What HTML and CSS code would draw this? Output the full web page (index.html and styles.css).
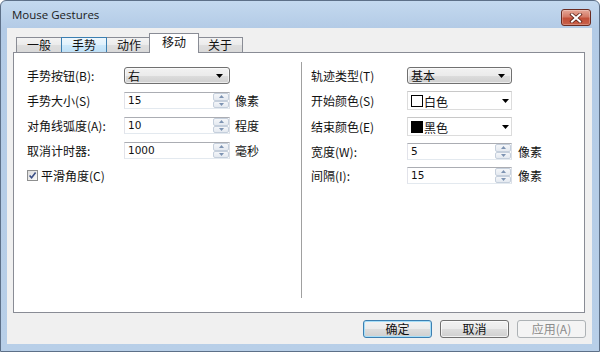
FILE: index.html
```html
<!DOCTYPE html>
<html>
<head>
<meta charset="utf-8">
<link rel="stylesheet" href="styles.css">
</head>
<body>
<div class="window">
  <div class="titlebar">
    <span class="title">Mouse Gestures</span>
    <div class="close">
      <svg width="14" height="10" viewBox="0 0 14 10"><path d="M3 1.5 L11 8.5 M11 1.5 L3 8.5" stroke="#5a1f16" stroke-width="3.6" stroke-linecap="square"/><path d="M3 1.5 L11 8.5 M11 1.5 L3 8.5" stroke="#ffffff" stroke-width="2" stroke-linecap="square"/></svg>
    </div>
  </div>
  <div class="client">
    <div class="tabs">
      <div class="tab">一般</div>
      <div class="tab hover">手势</div>
      <div class="tab">动作</div>
      <div class="tab selected">移动</div>
      <div class="tab">关于</div>
    </div>
    <div class="panel">
      <div class="col left">
        <div class="row">
          <span class="lbl">手势按钮(B):</span>
          <div class="combo"><span class="ctext">右</span><svg class="arrow" width="7" height="4" viewBox="0 0 7 4"><polygon points="0,0 7,0 3.5,4" fill="#000"/></svg></div>
        </div>
        <div class="row">
          <span class="lbl">手势大小(S)</span>
          <div class="spin"><span class="val">15</span><div class="sbs"><div class="sb"><svg width="5" height="3" viewBox="0 0 5 3"><polygon points="0,3 5,3 2.5,0" fill="#7d93b2"/></svg></div><div class="sb"><svg width="5" height="3" viewBox="0 0 5 3"><polygon points="0,0 5,0 2.5,3" fill="#7d93b2"/></svg></div></div></div>
          <span class="suf">像素</span>
        </div>
        <div class="row">
          <span class="lbl">对角线弧度(A):</span>
          <div class="spin"><span class="val">10</span><div class="sbs"><div class="sb"><svg width="5" height="3" viewBox="0 0 5 3"><polygon points="0,3 5,3 2.5,0" fill="#7d93b2"/></svg></div><div class="sb"><svg width="5" height="3" viewBox="0 0 5 3"><polygon points="0,0 5,0 2.5,3" fill="#7d93b2"/></svg></div></div></div>
          <span class="suf">程度</span>
        </div>
        <div class="row">
          <span class="lbl">取消计时器:</span>
          <div class="spin"><span class="val">1000</span><div class="sbs"><div class="sb"><svg width="5" height="3" viewBox="0 0 5 3"><polygon points="0,3 5,3 2.5,0" fill="#7d93b2"/></svg></div><div class="sb"><svg width="5" height="3" viewBox="0 0 5 3"><polygon points="0,0 5,0 2.5,3" fill="#7d93b2"/></svg></div></div></div>
          <span class="suf">毫秒</span>
        </div>
        <div class="row check">
          <span class="cbox"><svg width="9" height="9" viewBox="0 0 9 9"><path d="M1.6 4.4 L3.6 6.8 L7.6 1.6" fill="none" stroke="#3b4f86" stroke-width="1.6"/></svg></span>
          <span class="ctl">平滑角度(C)</span>
        </div>
      </div>
      <div class="divider"></div>
      <div class="col right">
        <div class="row">
          <span class="lbl">轨迹类型(T)</span>
          <div class="combo"><span class="ctext">基本</span><svg class="arrow" width="7" height="4" viewBox="0 0 7 4"><polygon points="0,0 7,0 3.5,4" fill="#000"/></svg></div>
        </div>
        <div class="row tall">
          <span class="lbl">开始颜色(S)</span>
          <div class="ccombo"><span class="swatch white"></span><span class="ctext2">白色</span><svg class="arrow" width="7" height="4" viewBox="0 0 7 4"><polygon points="0,0 7,0 3.5,4" fill="#000"/></svg></div>
        </div>
        <div class="row tall">
          <span class="lbl">结束颜色(E)</span>
          <div class="ccombo"><span class="swatch black"></span><span class="ctext2">黑色</span><svg class="arrow" width="7" height="4" viewBox="0 0 7 4"><polygon points="0,0 7,0 3.5,4" fill="#000"/></svg></div>
        </div>
        <div class="row">
          <span class="lbl">宽度(W):</span>
          <div class="spin"><span class="val">5</span><div class="sbs"><div class="sb"><svg width="5" height="3" viewBox="0 0 5 3"><polygon points="0,3 5,3 2.5,0" fill="#7d93b2"/></svg></div><div class="sb"><svg width="5" height="3" viewBox="0 0 5 3"><polygon points="0,0 5,0 2.5,3" fill="#7d93b2"/></svg></div></div></div>
          <span class="suf">像素</span>
        </div>
        <div class="row">
          <span class="lbl">间隔(I):</span>
          <div class="spin"><span class="val">15</span><div class="sbs"><div class="sb"><svg width="5" height="3" viewBox="0 0 5 3"><polygon points="0,3 5,3 2.5,0" fill="#7d93b2"/></svg></div><div class="sb"><svg width="5" height="3" viewBox="0 0 5 3"><polygon points="0,0 5,0 2.5,3" fill="#7d93b2"/></svg></div></div></div>
          <span class="suf">像素</span>
        </div>
      </div>
    </div>
    <div class="buttons">
      <div class="btn default">确定</div>
      <div class="btn">取消</div>
      <div class="btn disabled">应用(A)</div>
    </div>
  </div>
</div>
</body>
</html>
```

FILE: styles.css
```css
html, body {
  margin: 0;
  padding: 0;
  width: 600px;
  height: 352px;
  overflow: hidden;
  background: #ffffff;
}

.window {
  width: 600px;
  height: 352px;
  box-sizing: border-box;
  border: 1px solid #5d7088;
  border-radius: 6px 6px 0 0;
  background: linear-gradient(#c4d9ef 0px, #b3cbe6 27px, #b8cfe8 100%);
  padding: 0 7px 7px 6px;
  display: flex;
  flex-direction: column;
  font-family: "Noto Sans CJK SC", "Noto Sans", sans-serif;
  font-size: 12px;
  color: #111;
}

.titlebar {
  height: 27px;
  display: flex;
  align-items: flex-start;
  padding-top: 8px;
  box-sizing: border-box;
}

.title {
  font-family: "Open Sans", "Noto Sans", sans-serif;
  font-size: 11.5px;
  color: #1b1b1b;
  padding-left: 5px;
  line-height: 12px;
}

.close {
  margin-left: auto;
  margin-right: 1px;
  width: 30px;
  height: 17px;
  box-sizing: border-box;
  border: 1px solid #6b2c22;
  border-radius: 3px;
  background: linear-gradient(#e6a797 0%, #d47a66 45%, #c24f38 55%, #c9614a 100%);
  display: flex;
  align-items: center;
  justify-content: center;
  box-shadow: inset 0 0 0 1px rgba(255,255,255,0.25);
}

.client {
  flex: 1;
  background: #f0f0f0;
  display: flex;
  flex-direction: column;
}

.tabs {
  height: 24px;
  display: flex;
  align-items: flex-end;
  padding-left: 9px;
  position: relative;
  z-index: 1;
}

.tab {
  height: 15px;
  box-sizing: border-box;
  padding: 0 10px;
  border: 1px solid #898c95;
  border-bottom: none;
  margin-right: -1px;
  background: linear-gradient(#f3f3f3 0%, #ebebeb 50%, #dedede 51%, #d9d9d9 100%);
  line-height: 14px;
  display: flex;
  align-items: center;
}

.tab.hover {
  background: linear-gradient(#eef7fd 0%, #e0f1fc 50%, #cde8fa 51%, #bfe0f6 100%);
  border-color: #3c7fb1;
  position: relative;
  z-index: 1;
}

.tab.selected {
  height: 20px;
  background: #ffffff;
  margin: 0 -2px -1px -2px;
  padding: 0 12px 3px 12px;
  position: relative;
  z-index: 2;
}

.panel {
  height: 261px;
  box-sizing: border-box;
  margin: 0 7px 0 6px;
  border: 1px solid #898c95;
  background: #ffffff;
  display: flex;
  padding: 9px 0 14px 13px;
}

.col {
  display: flex;
  flex-direction: column;
  padding-top: 5px;
}

.col.left {
  width: 274px;
  gap: 8px;
}

.col.right {
  padding-left: 9px;
  gap: 7px;
}

.divider {
  width: 1px;
  background: #a0a0a0;
  box-shadow: 1px 0 0 #ffffff;
}

.row {
  height: 17px;
  display: flex;
  align-items: center;
}

.row.tall {
  height: 19px;
}

.lbl {
  line-height: 17px;
}

.left .lbl {
  width: 97px;
}

.right .lbl {
  width: 96px;
}

.suf {
  margin-left: 5px;
}

.right .suf {
  margin-left: 6px;
}

.combo {
  width: 106px;
  height: 17px;
  box-sizing: border-box;
  border: 1px solid #707070;
  border-radius: 3px;
  background: linear-gradient(#f2f2f2 0%, #ebebeb 50%, #dddddd 51%, #cfcfcf 100%);
  box-shadow: inset 0 0 0 1px rgba(255,255,255,0.6);
  display: flex;
  align-items: center;
  padding-left: 3px;
  padding-right: 6px;
}

.right .combo {
  width: 105px;
}

.ctext {
  flex: 1;
  line-height: 15px;
}

.arrow {
  flex: none;
}

.ccombo {
  width: 105px;
  height: 19px;
  box-sizing: border-box;
  border: 1px solid #dcdcdc;
  border-top-color: #c8c8c8;
  background: #ffffff;
  display: flex;
  align-items: center;
  padding-left: 3px;
  padding-right: 2px;
  padding-top: 1px;
}

.swatch {
  width: 12px;
  height: 12px;
  box-sizing: border-box;
  border: 1px solid #000;
  flex: none;
}

.swatch.white {
  background: #ffffff;
}

.swatch.black {
  background: #000000;
}

.ctext2 {
  flex: 1;
  margin-left: 1px;
  line-height: 15px;
}

.spin {
  width: 106px;
  height: 17px;
  box-sizing: border-box;
  border: 1px solid #abadb3;
  border-color: #abadb3 #dbdfe6 #e3e9ef #e2e3ea;
  background: #ffffff;
  display: flex;
}

.right .spin {
  width: 105px;
}

.val {
  flex: 1;
  font-family: "DejaVu Sans", sans-serif;
  font-size: 10.5px;
  line-height: 15px;
  padding-left: 3px;
}

.sbs {
  width: 16px;
  display: flex;
  flex-direction: column;
}

.sb {
  flex: 1;
  box-sizing: border-box;
  border: 1px solid #c5cfdc;
  border-radius: 2px;
  background: linear-gradient(#f4f6f9, #e4e9f0);
  display: flex;
  align-items: center;
  justify-content: center;
}

.row.check {
  height: 17px;
}

.cbox {
  width: 11px;
  height: 11px;
  box-sizing: border-box;
  border: 1px solid #8e8f8f;
  background: linear-gradient(135deg, #dcdcdc, #fbfbfb);
  display: flex;
  align-items: center;
  justify-content: center;
  flex: none;
}

.ctl {
  margin-left: 3px;
}

.buttons {
  display: flex;
  justify-content: flex-end;
  gap: 8px;
  padding: 7px 6px 0 0;
}

.btn {
  width: 69px;
  height: 18px;
  box-sizing: border-box;
  border: 1px solid #707070;
  border-radius: 3px;
  background: linear-gradient(#f2f2f2 0%, #ebebeb 50%, #dddddd 51%, #cfcfcf 100%);
  box-shadow: inset 0 0 0 1px rgba(255,255,255,0.7);
  display: flex;
  align-items: center;
  justify-content: center;
  line-height: 16px;
}

.btn.default {
  border-color: #3c7fb1;
  box-shadow: inset 0 0 0 1px #a6def8;
}

.btn.disabled {
  border-color: #adb2b5;
  background: #f4f4f4;
  box-shadow: none;
  color: #8b8b8b;
}
```
